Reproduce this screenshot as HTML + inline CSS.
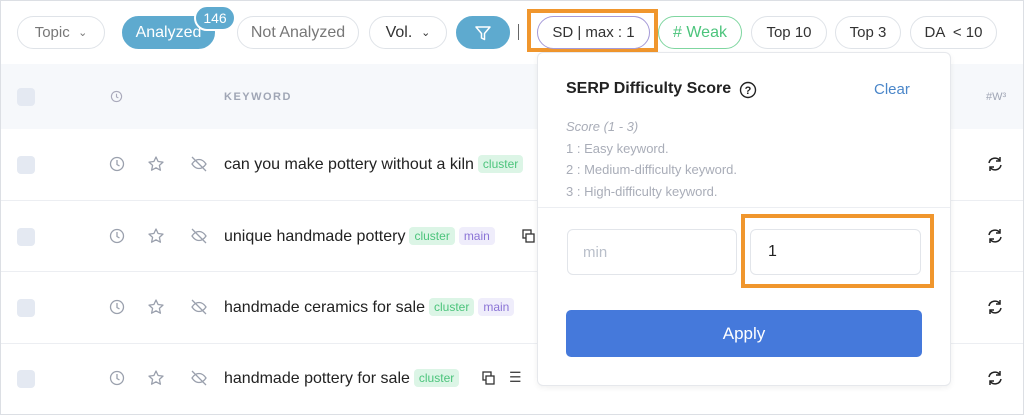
<!DOCTYPE html>
<html><head><style>
*{box-sizing:border-box;margin:0;padding:0}
body{width:1024px;height:415px;background:#fff;font-family:"Liberation Sans",sans-serif;position:relative;overflow:hidden}
.frame{position:absolute;left:0;top:0;width:1024px;height:415px;border:1px solid #dcdfe4}
.a{position:absolute}
.pill{position:absolute;top:16px;height:33px;border:1px solid #dfe3e8;border-radius:17px;font-size:15px;color:#333;display:flex;align-items:center;justify-content:center;background:#fff}
.hdr{position:absolute;left:1px;top:64px;width:1022px;height:65px;background:#f6f8fb}
.sep{position:absolute;left:1px;width:1022px;height:1px;background:#eceef2}
.cb{position:absolute;left:17px;width:18px;height:18px;border-radius:4px;background:#e4e9f2}
.kw{position:absolute;left:224px;font-size:16px;color:#222}
.tag{display:inline-block;font-size:12px;padding:2px 5px;border-radius:4px;margin-left:4px;vertical-align:1px}
.cl{background:#dcf5e6;color:#4cc47c}
.mn{background:#efedfb;color:#8b74d6}
svg{position:absolute}
</style></head><body>
<div class="frame"></div>
<div class="hdr"></div>
<div class="sep" style="top:200px"></div>
<div class="sep" style="top:271px"></div>
<div class="sep" style="top:343px"></div>

<div class="pill" style="left:17px;width:88px;color:#777">Topic&nbsp;&nbsp;<span style="font-size:11px">⌄</span></div>
<div class="pill" style="left:122px;width:93px;background:#5eaacf;border-color:#5eaacf;color:#fff;font-size:16px">Analyzed</div>
<div class="a" style="left:194px;top:5px;width:42px;height:26px;border-radius:13px;background:#5eaacf;border:2px solid #fff;color:#fff;font-size:14px;text-align:center;line-height:22px">146</div>
<div class="pill" style="left:237px;width:122px;color:#777;font-size:16px">Not Analyzed</div>
<div class="pill" style="left:369px;width:78px;font-size:16px">Vol.&nbsp;&nbsp;<span style="font-size:11px">⌄</span></div>
<div class="pill" style="left:456px;width:54px;background:#5eaacf;border-color:#5eaacf">
<svg style="position:static" width="18" height="18" viewBox="0 0 18 18"><path d="M2 3h14l-5.5 6.5v6l-3-1.5v-4.5z" fill="none" stroke="#fff" stroke-width="1.5" stroke-linejoin="round"/></svg></div>
<div class="a" style="left:518px;top:24px;width:1px;height:16px;background:#666"></div>
<div class="a" style="left:527px;top:9px;width:131px;height:43px;border:4px solid #f0962d"></div>
<div class="pill" style="left:537px;width:113px;border-color:#a59ad8">SD | max : 1</div>
<div class="pill" style="left:658px;width:84px;border-color:#7fd6a0;color:#4cc47c;font-size:16px"># Weak</div>
<div class="pill" style="left:751px;width:76px">Top 10</div>
<div class="pill" style="left:835px;width:66px">Top 3</div>
<div class="pill" style="left:910px;width:87px">DA &nbsp;&lt; 10</div>

<div class="cb" style="top:88px"></div>
<svg style="left:110px;top:90px" width="13" height="13" viewBox="0 0 14 14"><circle cx="7" cy="7" r="5.5" fill="none" stroke="#aab" stroke-width="1.2"/><path d="M7 4v3.5l2 1" fill="none" stroke="#aab" stroke-width="1.2"/></svg>
<div class="a" style="left:224px;top:91px;font-size:11px;letter-spacing:1.5px;color:#a0a6b5;font-weight:bold">KEYWORD</div>
<div class="a" style="left:986px;top:91px;font-size:11px;color:#a0a6b5">#W³</div>

<div class="cb" style="top:156px"></div><div class="cb" style="top:228px"></div><div class="cb" style="top:299px"></div><div class="cb" style="top:370px"></div>
<svg style="left:108px;top:155px" width="100" height="240" viewBox="0 0 100 240">
<g fill="none" stroke="#9aa0ad" stroke-width="1.3">
<g id="r"><circle cx="9" cy="9" r="6.5"/><path d="M9 5v4.5l2.5 1.5"/><path d="M48 2l2.1 4.5 4.9.6-3.6 3.3 1 4.8-4.4-2.4-4.4 2.4 1-4.8-3.6-3.3 4.9-.6z" stroke-linejoin="round"/><path d="M84 9c2-3 4.5-4.5 7-4.5s5 1.5 7 4.5c-2 3-4.5 4.5-7 4.5s-5-1.5-7-4.5z M84 2l14 14"/></g>
<use href="#r" y="72"/><use href="#r" y="143"/><use href="#r" y="214"/>
</g></svg>
<div class="kw" style="top:155px">can you make pottery without a kiln<span class="tag cl">cluster</span></div>
<div class="kw" style="top:227px">unique handmade pottery<span class="tag cl">cluster</span><span class="tag mn">main</span></div>
<div class="kw" style="top:298px">handmade ceramics for sale<span class="tag cl">cluster</span><span class="tag mn">main</span></div>
<div class="kw" style="top:369px">handmade pottery for sale<span class="tag cl">cluster</span></div>
<svg style="left:522px;top:229px" width="14" height="16"><rect x="1" y="1" width="8" height="8" fill="none" stroke="#333" stroke-width="1.3"/><rect x="4" y="5" width="8" height="8" fill="#fff" stroke="#333" stroke-width="1.3"/></svg>
<svg style="left:482px;top:371px" width="14" height="16"><rect x="1" y="1" width="8" height="8" fill="none" stroke="#333" stroke-width="1.3"/><rect x="4" y="5" width="8" height="8" fill="#fff" stroke="#333" stroke-width="1.3"/></svg>
<div class="a" style="left:509px;top:369px;font-size:14px;color:#444">☰</div>
<svg style="left:986px;top:155px" width="18" height="240" viewBox="0 0 18 240"><g fill="none" stroke="#222" stroke-width="1.5"><g id="s"><path d="M3 8a6 6 0 0 1 11-2M15 10a6 6 0 0 1-11 2"/><path d="M14 2v4h-4M4 16v-4h4"/></g><use href="#s" y="72"/><use href="#s" y="143"/><use href="#s" y="214"/></g></svg>

<div class="a" style="left:537px;top:52px;width:414px;height:334px;background:#fff;border:1px solid #e6e8ec;border-radius:6px;box-shadow:0 2px 6px rgba(0,0,0,.06)"></div>
<div class="a" style="left:566px;top:80px;font-size:16px;font-weight:bold;color:#222">SERP Difficulty Score</div>
<svg style="left:739px;top:81px" width="18" height="18"><circle cx="9" cy="9" r="7.5" fill="none" stroke="#222" stroke-width="1.4"/><text x="9" y="13" font-size="11" text-anchor="middle" font-family="Liberation Sans" font-weight="bold" fill="#222">?</text></svg>
<div class="a" style="left:874px;top:81px;font-size:15px;color:#4a86c9">Clear</div>
<div class="a" style="left:566px;top:116px;font-size:13px;color:#a9adb8;line-height:21.5px"><i>Score (1 - 3)</i><br>1 : Easy keyword.<br>2 : Medium-difficulty keyword.<br>3 : High-difficulty keyword.</div>
<div class="a" style="left:538px;top:207px;width:412px;height:1px;background:#eceef2"></div>
<div class="a" style="left:741px;top:214px;width:193px;height:74px;border:4px solid #f0962d"></div>
<div class="a" style="left:567px;top:229px;width:170px;height:46px;border:1px solid #e2e5ea;border-radius:6px;font-size:15px;color:#b9bfca;padding:14px 0 0 15px">min</div>
<div class="a" style="left:750px;top:229px;width:171px;height:46px;border:1px solid #e2e5ea;border-radius:6px;font-size:16px;color:#222;padding:13px 0 0 17px">1</div>
<div class="a" style="left:566px;top:310px;width:356px;height:47px;background:#4579db;border-radius:5px;color:#fff;font-size:17px;text-align:center;line-height:47px">Apply</div>
</body></html>
